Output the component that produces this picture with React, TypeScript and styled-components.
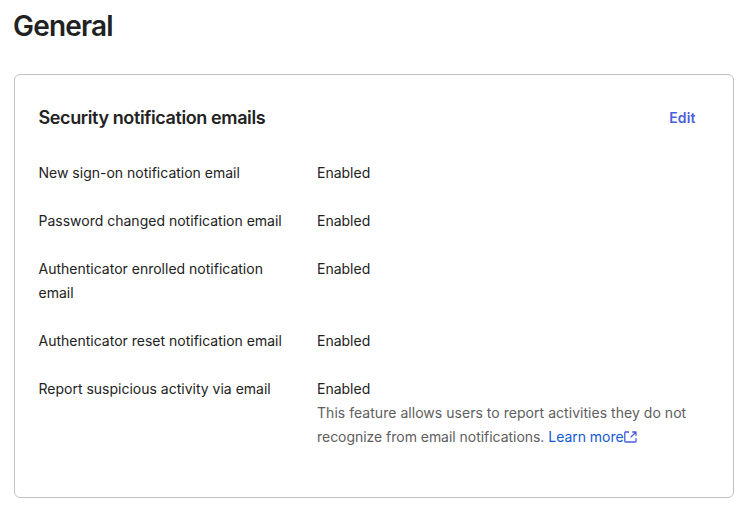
import React from "react";
import styled, { createGlobalStyle } from "styled-components";

const GlobalStyle = createGlobalStyle`
  * { box-sizing: border-box; }
  body { margin: 0; background: #fff; font-family: Inter, sans-serif; color: #222222; overflow: hidden; }
`;
const Page = styled.main`
  height: 508px;
  padding: 8px 16px 10px 13px;
  display: flex;
  flex-direction: column;
`;
const Title = styled.h1`
  margin: 0 0 30px;
  height: 36px;
  font-size: 28px;
  line-height: 36px;
  font-weight: 600;
  letter-spacing: -0.8px;
`;
const Card = styled.section`
  height: 424px;
  margin-left: 1px;
  border: 1px solid #c1c1c1;
  border-radius: 6px;
  padding: 30px 37.5px 0 23.5px;
`;
const CardHeader = styled.header`
  display: flex;
  justify-content: space-between;
  align-items: center;
  height: 26px;
  margin-bottom: 30px;
`;
const CardTitle = styled.h2`
  margin: 0;
  font-size: 18px;
  line-height: 26px;
  font-weight: 600;
  letter-spacing: -0.39px;
`;
const EditButton = styled.button`
  border: 0;
  padding: 0;
  background: none;
  font: 600 14px/24px Inter, sans-serif;
  letter-spacing: 0.1px;
  color: #4c5fdc;
`;
const Settings = styled.dl`
  margin: 0;
  display: grid;
  grid-template-columns: 250px 400px;
  column-gap: 28.5px;
  row-gap: 24px;
  font-size: 14px;
  line-height: 24px;
`;
const Label = styled.dt``;
const Value = styled.dd`
  margin: 0;
`;
const Hint = styled.div`
  color: #5e5e5e;
`;
const HintLine = styled.span<{ $tracking: number }>`
  display: block;
  letter-spacing: ${({ $tracking }) => $tracking}px;
`;
const Link = styled.a`
  color: #1159d6;
`;
const Icon = styled.svg`
  color: #4c5ce0;
  vertical-align: -2px;
`;

const rows: string[] = [
  "New sign-on notification email",
  "Password changed notification email",
  "Authenticator enrolled notification email",
  "Authenticator reset notification email",
];

export default function App() {
  return (
    <Page>
      <GlobalStyle />
      <Title>General</Title>
      <Card>
        <CardHeader>
          <CardTitle>Security notification emails</CardTitle>
          <EditButton>Edit</EditButton>
        </CardHeader>
        <Settings>
          {rows.map((label) => (
            <React.Fragment key={label}>
              <Label>{label}</Label>
              <Value>Enabled</Value>
            </React.Fragment>
          ))}
          <Label>Report suspicious activity via email</Label>
          <Value>
            Enabled
            <Hint>
              <HintLine $tracking={0.035}>
                This feature allows users to report activities they do not
              </HintLine>
              <HintLine $tracking={-0.035}>
                recognize from email notifications.{" "}
                <Link>
                  Learn more
                  <Icon width="14" height="14" viewBox="0 0 14 14" fill="none" stroke="currentColor" strokeWidth="1.3" strokeLinejoin="round">
                    <path d="M5 2H1.5Q.8 2 .8 2.7v8.6q0 .7.7.7h9.8q.7 0 .7-.7V8.2M8.2 2H12v3.8M12 2L6.6 7.4" />
                  </Icon>
                </Link>
              </HintLine>
            </Hint>
          </Value>
        </Settings>
      </Card>
    </Page>
  );
}
